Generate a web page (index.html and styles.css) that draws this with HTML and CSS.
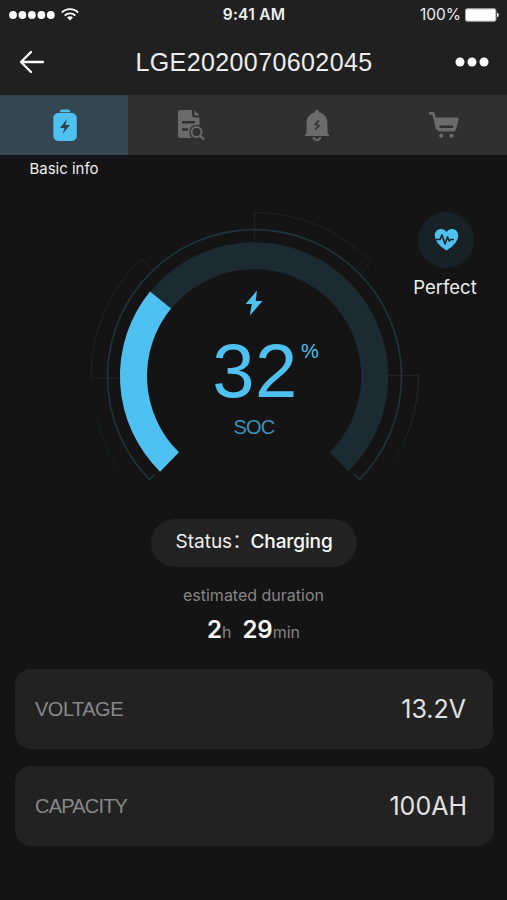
FILE: index.html
```html
<!DOCTYPE html>
<html lang="en">
<head>
<meta charset="utf-8">
<title>Battery</title>
<link rel="stylesheet" href="styles.css">
</head>
<body>
<header class="top">
  <div class="statusbar">
    <div class="signal">
      <svg width="46" height="10" viewBox="0 0 46 10" fill="#fff"><circle cx="4" cy="5" r="3.9"/><circle cx="13.4" cy="5" r="3.9"/><circle cx="22.9" cy="5" r="3.9"/><circle cx="32.4" cy="5" r="3.9"/><circle cx="41.8" cy="5" r="3.9"/></svg>
      <svg width="18" height="13" viewBox="0 0 18 13" fill="none" stroke="#fff" stroke-width="1.8"><path d="M.8 4.6a11.6 11.6 0 0 1 16.4 0"/><path d="M3.7 7.6a7.5 7.5 0 0 1 10.6 0"/><path d="M9 12.4L6 9.6a4.3 4.3 0 0 1 6 0z" fill="#fff" stroke="none"/></svg>
    </div>
    <div class="clock">9:41 AM</div>
    <div class="power">
      <span>100%</span>
      <svg width="34" height="14" viewBox="0 0 34 14"><rect x=".5" y=".8" width="30.4" height="12.4" rx="1.6" fill="#fff" stroke="#aaa"/><path d="M32 4.8q1.8.5 1.8 2.2T32 9.2z" fill="#fff"/></svg>
    </div>
  </div>
  <div class="titlebar">
    <svg width="26" height="24" viewBox="0 0 26 24" fill="none" stroke="#fff" stroke-width="2.3" stroke-linecap="round" stroke-linejoin="round"><path d="M12 2L2 12l10 10M2 12h22"/></svg>
    <h1>LGE2020070602045</h1>
    <svg width="34" height="10" viewBox="0 0 34 10" fill="#fff"><circle cx="5" cy="5" r="4.5"/><circle cx="17" cy="5" r="4.5"/><circle cx="29" cy="5" r="4.5"/></svg>
  </div>
</header>
<nav class="tabs">
  <div class="tab active"><svg width="24" height="32" viewBox="0 0 24 32"><path d="M6.5 3.3q.5-2.8 2.5-2.8h6q2 0 2.500 2.800z" fill="#4fc1f0"/><rect x=".3" y="4" width="23.500" height="28" rx="5" fill="#4fc1f0"/><path d="M14 10L7 19h4.500L9.500 25l7.500-9h-4.500z" fill="#30444d"/></svg></div>
  <div class="tab"><svg width="28" height="32" viewBox="0 0 28 32"><path d="M3.500 1H15v4.500q0 3 3 3h4.500V29H3.500Q1 29 1 26V4q0-3 2.500-3z" fill="#6b6b6b"/><path d="M17.500 1l5 5.500h-3.500q-1.500 0-1.500-1.500z" fill="#6b6b6b"/><path d="M5 13.300h13M5 20.500h6" stroke="#303030" stroke-width="2.400"/><circle cx="19.500" cy="23" r="7.300" fill="#303030"/><circle cx="19.500" cy="23" r="5" fill="none" stroke="#6b6b6b" stroke-width="2"/><path d="M23 26.500l4 4" stroke="#6b6b6b" stroke-width="2.200"/></svg></div>
  <div class="tab"><svg width="26" height="32" viewBox="0 0 26 32"><path d="M13 .5q1.800 0 2 2.700C20 4.300 23.500 8.500 23.500 14v9.500q0 1 1.500 2.500v1H1v-1q1.500-1.500 1.500-2.500V14C2.500 8.500 6 4.300 11 3.200Q11.200.5 13 .5z" fill="#6b6b6b"/><path d="M9.500 28q.5 3 3.500 3t3.500-3" fill="none" stroke="#6b6b6b" stroke-width="1.800"/><path d="M14.800 11.500l-3.500 3.900 3.700 1.200-3.500 3.900" fill="none" stroke="#303030" stroke-width="1.600"/></svg></div>
  <div class="tab"><svg width="32" height="28" viewBox="0 0 32 28"><path d="M2 2.300h3l1.500 4.200 2.500 11" fill="none" stroke="#6b6b6b" stroke-width="2.500" stroke-linecap="round"/><path d="M6 6.500h23q2 0 1.700 2L28 18.500q-.4 2-2.500 2H12q-2 0-2.500-2z" fill="#6b6b6b"/><path d="M12.500 15.800H24" stroke="#303030" stroke-width="2.600" stroke-linecap="round"/><circle cx="13.200" cy="24.800" r="2.100" fill="#6b6b6b"/><circle cx="23.500" cy="24.800" r="2.100" fill="#6b6b6b"/></svg></div>
</nav>
<div class="tab-label">Basic info</div>
<main>
  <section class="overview">
    <div class="gauge">
      <svg class="dial" width="332" height="276" viewBox="88 210 332 276" fill="none">
        <defs><linearGradient id="fade" x1="0" y1="0" x2="0" y2="1"><stop offset="0" stop-color="#23302f"/><stop offset="1" stop-color="#191c1c"/></linearGradient></defs>
        <g stroke="#202524" stroke-width="1">
          <path d="M254.500 240V212.500A163 163 0 0 1 371.300 262L361 273"/>
          <path d="M155 272L141 259A163.500 163.500 0 0 0 91 378h28"/>
          <path d="M388 375.500h31"/>
          <path d="M97 420a163 163 0 0 0 20 47" stroke="#1c2222"/>
          <path d="M418.500 375.500A164 164 0 0 1 390 467" stroke="url(#fade)"/>
        </g>
        <path d="M155 474l-5.500 5.500A147 147 0 1 1 359.500 479.500L354 474" stroke="#20343a" stroke-width="1.600"/>
        <path d="M169.500 462A120.500 120.500 0 1 1 339 462" stroke="#1c2b32" stroke-width="27"/>
        <path d="M169.500 462A120.500 120.500 0 0 1 160.500 300" stroke="#4fc1f0" stroke-width="27"/>
      </svg>
      <div class="reading">
        <svg width="18" height="26" viewBox="0 0 18 26" fill="#4fc1f0"><path d="M12 .5L.5 14h6.300L4.800 25.500 17.500 11h-6.800z"/></svg>
        <div class="soc-value"><span class="num">32</span><span class="pct">%</span></div>
        <div class="soc">SOC</div>
      </div>
    </div>
    <div class="health">
      <div class="badge"><svg width="25" height="24" viewBox="0 0 25 24"><path d="M12.500 22.500Q.5 15 .8 7.500C1 3 4 1 7 1q3.500 0 5.500 3Q14.500 1 18 1c3 0 6 2 6.200 6.500q.3 7.500-11.700 15z" fill="#4fc1f0"/><path d="M0 11.500h6l2-4.500 3 9 2.500-7 1.800 4 1.500-1.500H20" fill="none" stroke="#182429" stroke-width="1.700" stroke-linejoin="round"/></svg></div>
      <div class="health-label">Perfect</div>
    </div>
  </section>
  <div class="status"><span>Status：</span><strong>Charging</strong></div>
  <div class="est">estimated duration</div>
  <div class="duration"><b>2</b><i>h</i><b class="mins">29</b><i>min</i></div>
  <section class="cards">
    <div class="card"><span class="name">VOLTAGE</span><span class="value">13.2V</span></div>
    <div class="card wide"><span class="name cap">CAPACITY</span><span class="value ah">100AH</span></div>
  </section>
</main>
</body>
</html>
```
FILE: styles.css
```css
* { box-sizing: border-box; }
body { margin: 0; height: 900px; overflow: hidden; background: #141414; color: #eee; font-family: Inter, "Noto Sans CJK SC", sans-serif; }
svg { display: block; flex: none; }
.top { height: 95px; background: #202020; }
.statusbar { height: 29px; display: grid; grid-template-columns: 1fr auto 1fr; align-items: center; padding: 0 8px 0 9px; }
.signal { display: flex; align-items: center; gap: 6px; }
.clock { font-size: 15.500px; font-weight: 600; letter-spacing: .25px; }
.power { display: flex; justify-content: flex-end; align-items: center; gap: 4px; font-size: 15.500px; }
.titlebar { height: 66px; display: flex; align-items: center; justify-content: space-between; padding: 0 18px 0 19px; }
h1 { margin: 0; padding-left: 8px; font: 400 25px/30px "Liberation Sans", sans-serif; letter-spacing: .4px; }
.tabs { height: 60px; display: grid; grid-template-columns: repeat(4, 1fr); background: #303030; }
.tab { display: flex; align-items: center; justify-content: center; }
.tab.active { background: #344650; width: 128px; padding-left: 2px; }
.tab-label { height: 28px; width: 128px; text-align: center; font-size: 15px; line-height: 28px; }
.overview { display: grid; grid-template-columns: 88px 332px 1fr; height: 336px; padding-top: 27px; }
.gauge { grid-column: 2; display: grid; }
.dial, .reading { grid-area: 1 / 1; }
.reading { display: flex; flex-direction: column; align-items: center; padding-top: 80px; color: #4fc1f0; font-family: "Liberation Sans", sans-serif; }
.soc-value { display: flex; align-items: flex-start; height: 94px; padding: 17px 0 0 23px; }
.num { font-size: 76px; line-height: 76px; letter-spacing: .5px; }
.pct { font-size: 20px; line-height: 24px; margin: 6px 0 0 3px; }
.soc { font-size: 20px; line-height: 24px; margin-top: 5px; letter-spacing: -.8px; color: #3d92b6; }
.health { grid-column: 3; margin-left: -11px; width: 72px; display: flex; flex-direction: column; align-items: center; }
.badge { width: 56px; height: 56px; border-radius: 50%; background: #182226; display: flex; align-items: center; justify-content: center; margin: 2px 0 0 2px; }
.health-label { font-size: 18.500px; line-height: 24px; margin-top: 7px; }
.status { width: 206px; height: 48px; margin: 0 auto; border-radius: 24px; background: #222; display: flex; align-items: center; font-size: 19px; line-height: 28px; padding: 0 0 3px 25px; white-space: nowrap; }
.status span { width: 75px; }
.status strong { font-weight: 500; letter-spacing: -.1px; color: #fff; }
.est { text-align: center; margin-top: 17px; font-size: 16px; line-height: 22px; color: #858585; }
.duration { display: flex; justify-content: center; align-items: baseline; margin-top: 7px; height: 56px; line-height: 34px; }
.duration b { font-size: 24px; font-weight: 600; color: #fff; }
.duration i { font-size: 16px; font-style: normal; color: #858585; }
.mins { margin-left: 11px; }
.cards { display: grid; gap: 17px; padding: 0 12px 0 15px; }
.card { width: 478px; height: 80px; border-radius: 16px; background: #222; display: flex; align-items: center; justify-content: space-between; padding: 0 27px 0 20px; }
.card.wide { width: 479px; }
.name { font: 20px "Liberation Sans", sans-serif; color: #888; letter-spacing: -.5px; }
.cap { letter-spacing: -.8px; }
.value { font-size: 25px; color: #e2e2e2; }
```
